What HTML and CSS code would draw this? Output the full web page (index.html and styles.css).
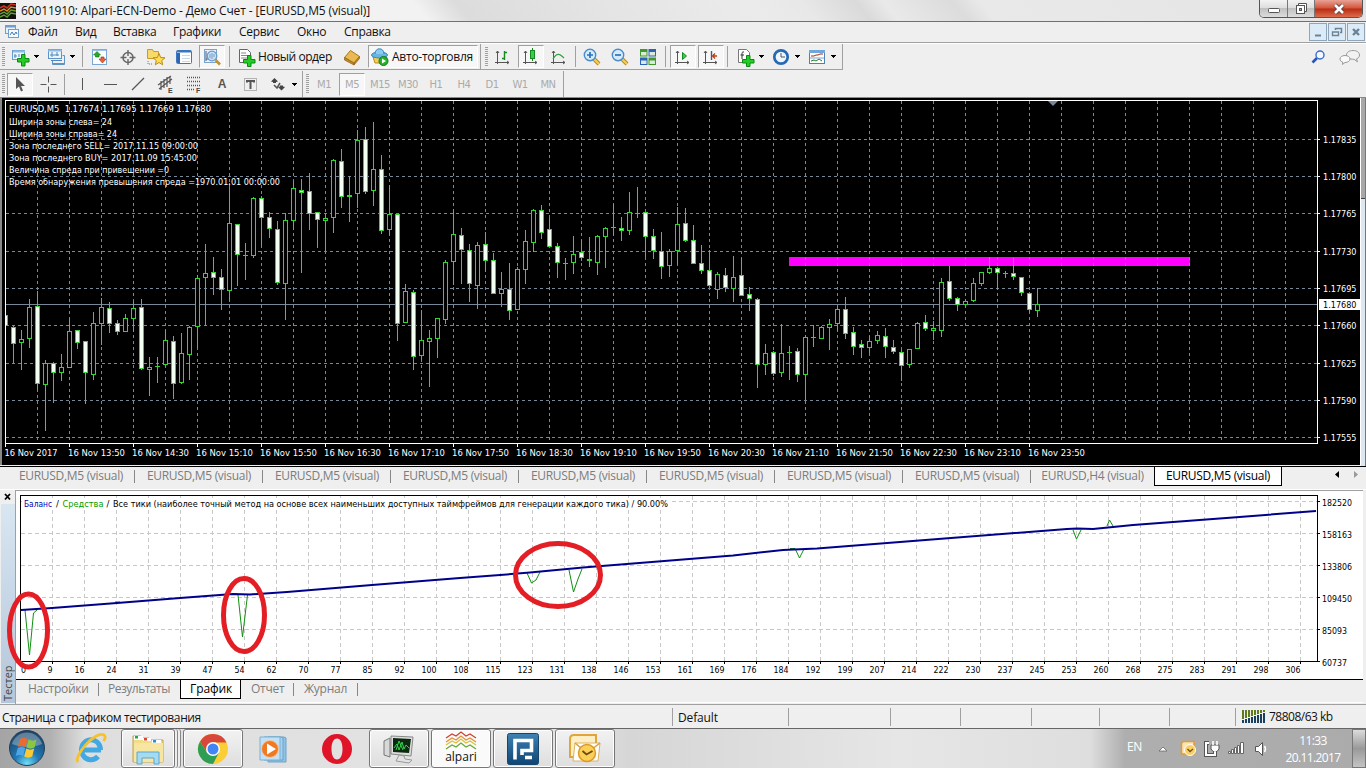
FILE: index.html
```
<!DOCTYPE html>
<html lang="ru">
<head>
  <meta charset="UTF-8" />
  <title>60011910: Alpari-ECN-Demo - Демо Счет</title>
  <link rel="stylesheet" href="styles.css">
</head>
<body>
  <div class="titlebar">
    <svg class="app-logo" width="16" height="16" viewBox="0 0 16 16"><rect width="16" height="16" fill="#111"/><path d="M0 5L4 3 7 5 11 1 16 2" stroke="#d03020" fill="none" stroke-width="1.6"/><path d="M0 8L4 6 7 8 11 4 16 5" stroke="#e08a20" fill="none" stroke-width="1.4"/><path d="M0 11L4 9 7 11 11 7 16 8M0 14L4 12 7 14 11 10 16 11" stroke="#5fa030" fill="none" stroke-width="1.4"/></svg>
    <span class="title">60011910: Alpari-ECN-Demo - Демо Счет - [EURUSD,M5 (visual)]</span>
    <div class="win-buttons">
      <span class="wb min"><svg width="14" height="8"><rect x="1.5" y="2.5" width="11" height="4" rx="1" fill="#fff" stroke="#555"/></svg></span>
      <span class="wb max"><svg width="13" height="13"><path d="M3.500 3V1.500h8v8H10" fill="#fff" stroke="#555"/><rect x="1.500" y="3.500" width="8" height="8" fill="#fff" stroke="#555"/><rect x="4.500" y="6.500" width="2" height="2" fill="#aaa" stroke="#555"/></svg></span>
      <span class="wb close"><svg width="14" height="12"><path d="M3 2l8 8M11 2l-8 8" stroke="#5b4040" stroke-width="4.500"/><path d="M3 2l8 8M11 2l-8 8" stroke="#fff" stroke-width="2.600"/></svg></span>
    </div>
  </div>

  <div class="menubar">
    <svg class="menu-logo" width="16" height="16"><rect x="1.500" y="1.500" width="10" height="8" fill="#e8f2fb" stroke="#6f9fcd"/><path d="M1 2.500h11" stroke="#6f9fcd" stroke-width="2"/><rect x="4.500" y="5.500" width="10" height="8" fill="#f4f9ff" stroke="#6f9fcd"/><path d="M6 11l2-3 2 3 2-3 1 2" stroke="#3f78b8" fill="none"/></svg>
    <span class="m-file">Файл</span><span class="m-view">Вид</span><span class="m-insert">Вставка</span><span class="m-charts">Графики</span><span class="m-service">Сервис</span><span class="m-window">Окно</span><span class="m-help">Справка</span>
    <div class="mdi-buttons">
      <span><svg width="16" height="16"><path d="M5 11.500h6" stroke="#6d8296" stroke-width="2"/></svg></span>
      <span><svg width="16" height="16"><path d="M6.500 6V4.500h6v4H11M6 4.500h7" stroke="#6d8296" fill="none" stroke-width="1.500"/><path d="M3.500 8h6v3.500h-6z" stroke="#6d8296" fill="none" stroke-width="1.400"/></svg></span>
      <span><svg width="16" height="16"><path d="M5 5l6 6M11 5l-6 6" stroke="#6d8296" stroke-width="2.400"/></svg></span>
    </div>
  </div>

  <div class="toolbars">
    <div class="toolrow">
      <div class="toolbar">
        <i class="grip"></i>
        <span class="btn"><svg class="ic"><rect x="2.500" y="3.500" width="12" height="9" fill="#eaf4fc" stroke="#6a9dcc"/><path d="M3 4.500h12" stroke="#8fbce4" stroke-width="2"/><path d="M5 7v4M4 9h3M9 7v3" stroke="#5588b8"/><path d="M11.500 7.500h3.500v4h4v3.500h-4v4h-3.500v-4h-4v-3.500h4z" fill="#25cc25" stroke="#0b8a12"/></svg></span><i class="drop"></i>
        <span class="btn"><svg class="ic"><rect x="2.500" y="2.500" width="13" height="9" fill="#eaf4fc" stroke="#5f93c6"/><path d="M2 3.500h14" stroke="#8fbce4" stroke-width="2"/><path d="M6 5v5M4 8h9M11 5v4" stroke="#5588b8"/><path d="M6.500 13v4.500h12v-9h-2M6 16.500h12" fill="none" stroke="#5f93c6"/><path d="M5 13.500h11" stroke="#4f86bd"/></svg></span><i class="drop"></i>
        <i class="sep"></i>
        <span class="btn"><svg class="ic"><rect x="2.500" y="2.500" width="14" height="15" fill="#fbfdff" stroke="#7aa7d6"/><path d="M2 3h15" stroke="#7db0e2" stroke-width="1.500"/><path d="M7 4.500l3.500 3.500H9v2H5.500V8H3.500z" fill="#28a828" stroke="#126e12" stroke-width=".6"/><path d="M12.500 16l3.500-4h-2v-2h-3v2H9z" fill="#ee6030" stroke="#9c3010" stroke-width=".6"/></svg></span>
        <span class="btn"><svg class="ic"><circle cx="10" cy="10.500" r="5" fill="none" stroke="#666" stroke-width="1.500"/><path d="M10 3v6M10 12v6M2.500 10.500h6M11.500 10.500h6" stroke="#666" stroke-width="1.400"/></svg></span>
        <span class="btn"><svg class="ic"><path d="M1.500 11.500v-9h5l1 2h5v7z" fill="#f8da6a" stroke="#c89a2a"/><path d="M2 14v3h5" stroke="#777" stroke-dasharray="1 1" fill="none"/><path d="M13 6.500l1.700 4 4.300.3-3.300 2.800 1 4.200-3.700-2.300-3.700 2.300 1-4.200L7 10.800l4.300-.3z" fill="#ffdc50" stroke="#bd8a17"/></svg></span>
        <span class="btn"><svg class="ic"><rect x="2.500" y="3.500" width="15" height="13" rx="1" fill="#fff" stroke="#3d76ba"/><path d="M3 4.500h14" stroke="#3875c4" stroke-width="2"/><path d="M4.500 6v10" stroke="#2f66b4" stroke-width="3"/><path d="M8 8.500h8M8 11.500h8M8 14.500h8" stroke="#c7d8f0"/></svg></span>
        <span class="btn on"><svg class="ic"><rect x="2.500" y="2.500" width="12" height="13" fill="#eaf2fa" stroke="#7aa4cc"/><path d="M4 4v10M4 12h9M7 5v6" stroke="#557"/><circle cx="10" cy="9" r="4.800" fill="#c5e1f8" stroke="#6f9ac4" stroke-width="1.300"/><path d="M8 11V7M10 12V6M12 10V7" stroke="#7a9cc0"/><path d="M13.500 13l4.500 4.500" stroke="#c8912c" stroke-width="2.600"/></svg></span>
        <i class="sep order-sep"></i>
        <span class="order"><svg class="ic"><path d="M3.500 2.500h8l3 3v10h-11z" fill="#fff" stroke="#666"/><path d="M5 6h5M5 8.500h8M5 11h6" stroke="#888"/><path d="M11.500 8.500h3.500v4h4v3.500h-4v3.500h-3.500v-3.500h-4v-3.500h4z" fill="#25cc25" stroke="#0b8a12"/></svg><b>Новый ордер</b></span>
        <span class="btn book"><svg class="ic"><path d="M2.500 10.500l6-7 9 6-5.500 6.500z" fill="#eab950" stroke="#a9761c"/><path d="M2.500 10.500l9.500 5.500v2l-9.500-5zM12 16l5.500-6.500v2L12 18z" fill="#c08a2c" stroke="#98681a" stroke-width=".8"/></svg></span>
        <span class="auto"><svg class="ic"><path d="M3 10l2 6h10l2-6z" fill="#f6cf4c" stroke="#b88c24"/><ellipse cx="9.500" cy="8" rx="8" ry="3" fill="#68b6e6" stroke="#3c86b8"/><path d="M5 7c0-7 9-7 9 0" fill="#8ccbee" stroke="#3c86b8"/><circle cx="13.500" cy="14" r="4.500" fill="#27b327" stroke="#117a1a"/><path d="M12 11.500v5l4-2.500z" fill="#fff"/></svg><b>Авто-торговля</b></span>
      </div>
      <div class="toolbar charts-bar">
        <i class="grip"></i>
        <span class="btn"><svg class="ic"><path d="M4.500 4v13M2 15.500h14M3 6l1.500-2L6 6M14 14l2 1.500-2 1.500" stroke="#555" fill="none"/><path d="M11.500 4v9M9 11.500h2.500M11.500 5.500H14" stroke="#168a20" stroke-width="1.400"/></svg></span>
        <span class="btn on"><svg class="ic"><path d="M4.500 4v13M2 15.500h14M3 6l1.500-2L6 6M14 14l2 1.500-2 1.500" stroke="#555" fill="none"/><path d="M11.500 1v13" stroke="#168a20"/><rect x="9.500" y="3.500" width="4" height="8" fill="#35d045" stroke="#168a20"/></svg></span>
        <span class="btn"><svg class="ic"><path d="M4.500 4v13M2 15.500h14M3 6l1.500-2L6 6M14 14l2 1.500-2 1.500" stroke="#555" fill="none"/><path d="M4 12c4-7 7-5 11-1" stroke="#35a040" fill="none" stroke-width="1.300"/></svg></span>
        <i class="sep narrow"></i>
        <span class="btn"><svg class="ic"><path d="M12 12l5 5" stroke="#b98520" stroke-width="4"/><path d="M12 12l5 5" stroke="#f4cd54" stroke-width="2.200"/><circle cx="8" cy="8" r="5.700" fill="#d4ebfb" stroke="#4b8bc8" stroke-width="1.400"/><path d="M5 8h6M8 5v6" stroke="#2c73b8" stroke-width="1.700"/></svg></span>
        <span class="btn"><svg class="ic"><path d="M12 12l5 5" stroke="#b98520" stroke-width="4"/><path d="M12 12l5 5" stroke="#f4cd54" stroke-width="2.200"/><circle cx="8" cy="8" r="5.700" fill="#d4ebfb" stroke="#4b8bc8" stroke-width="1.400"/><path d="M5 8h6" stroke="#2c73b8" stroke-width="1.700"/></svg></span>
        <span class="btn"><svg class="ic"><path d="M2 2h7.500v7.500H2zM10.500 10.500H18V18h-7.500z" fill="#3f9a2c"/><path d="M10.500 2H18v7.500h-7.500zM2 10.500h7.500V18H2z" fill="#2d62b8"/><path d="M3 5h5.500v3.500H3zM11.500 5H17v3.500h-5.500zM3 13.500h5.500V17H3zM11.500 13.500H17V17h-5.500z" fill="#dcebd8"/></svg></span>
        <i class="sep wide"></i>
        <span class="btn on"><svg class="ic"><path d="M4.500 4v13M2 15.500h14M3 6l1.500-2L6 6M14 14l2 1.500-2 1.500" stroke="#555" fill="none"/><path d="M9.500 5.500v7l4-3.500z" fill="#40c850" stroke="#168a20"/></svg></span>
        <span class="btn on"><svg class="ic"><path d="M4.500 4v13M2 15.500h14M3 6l1.500-2L6 6M14 14l2 1.500-2 1.500" stroke="#555" fill="none"/><path d="M10.500 4v9" stroke="#3a5f8a" stroke-width="1.400"/><path d="M16 9h-4M14 6.500L11.500 9l2.500 2.500" stroke="#c43a14" fill="none" stroke-width="1.300"/></svg></span>
        <i class="sep small"></i>
        <span class="btn"><svg class="ic"><path d="M3.500 2.500h8l3 3v10h-11z" fill="#fff" stroke="#777"/><path d="M9 5c-2-.5-2 1-2 2v5M5.500 8h3.500" stroke="#333" fill="none"/><path d="M11.500 8.500h3.500v4h4v3.500h-4v3.500h-3.500v-3.500h-4v-3.500h4z" fill="#25cc25" stroke="#0b8a12"/></svg></span><i class="drop"></i>
        <span class="btn"><svg class="ic"><circle cx="10" cy="10" r="6.700" fill="#eef6fd" stroke="#2568b4" stroke-width="2.700"/><path d="M10 6v4h4" stroke="#555" fill="none"/></svg></span><i class="drop"></i>
        <span class="btn"><svg class="ic"><rect x="2.500" y="3.500" width="15" height="13" fill="#fff" stroke="#4d80b4"/><path d="M2 4.500h16" stroke="#6fa6dc" stroke-width="3"/><path d="M4 9h3l2-1h2l2-1h3" stroke="#a02818" fill="none"/><path d="M3 11h14" stroke="#7aa6d0"/><path d="M4 14l3-1 2 1 3-2 3 2" stroke="#208030" fill="none"/></svg></span><i class="drop"></i>
      </div>
      <div class="tool-right">
        <svg width="16" height="16"><path d="M1.500 13.500L6 9" stroke="#2454c0" stroke-width="2.600"/><circle cx="9" cy="6" r="4" fill="#f4f8ff" stroke="#3b6ad0" stroke-width="1.400"/></svg>
        <svg width="22" height="17"><path d="M14 1.500c4 0 6.500 2 6.500 4.500 0 2-1 3-3 3.800l1 3-3.500-2.500c-5 0-7.500-1.800-7.500-4.300s2.500-4.500 6.500-4.500z" fill="#f2f2f2" stroke="#999"/><path d="M6 6.500c3 0 5 1.500 5 3.500s-2 3.500-5 3.500l-2.500 2 .3-2.500C2 12.500 1 11.500 1 10c0-2 2-3.500 5-3.500z" fill="#fafafa" stroke="#999"/></svg>
      </div>
    </div>

    <div class="toolrow second">
      <div class="toolbar lines-bar">
        <i class="grip"></i>
        <span class="btn on"><svg class="ic"><path d="M6 3v12l3-2.500 2 5 2-1-2-4.500h4z" fill="#555"/></svg></span>
        <span class="btn"><svg class="ic"><path d="M10.500 2.500v6M10.500 12.500v6M2.500 10.500h6M12.500 10.500h6" stroke="#555"/></svg></span>
        <i class="sep small"></i>
        <span class="btn"><svg class="ic"><path d="M10.500 4v12" stroke="#555"/></svg></span>
        <span class="btn"><svg class="ic"><path d="M4 10.500h13" stroke="#555"/></svg></span>
        <span class="btn"><svg class="ic"><path d="M4 16L16 4" stroke="#555" stroke-width="1.200"/></svg></span>
        <span class="btn"><svg class="ic"><path d="M2 11L15 2M3 15L16 5M5 7v9M8 5v9M11 3v10M14 2v8" stroke="#555" stroke-width="1.200"/><text x="12" y="19" class="ic-sub">E</text></svg></span>
        <span class="btn"><svg class="ic"><path d="M3 3.500h14M3 7.500h14M3 11.500h14M3 15.500h7" stroke="#555" stroke-width="1.300" stroke-dasharray="1 1"/><text x="12" y="19" class="ic-sub">F</text></svg></span>
        <span class="btn letter">A</span>
        <span class="btn"><svg class="ic"><rect x="4.500" y="4.500" width="12" height="12" fill="none" stroke="#777" stroke-dasharray="1 1"/><path d="M7 8.500V7h7v1.500M10.500 7v8" stroke="#555" stroke-width="2" fill="none"/></svg></span>
        <span class="btn"><svg class="ic"><path d="M6.500 4l3.500 3.500-2 .5v1H5V8L3 7.500zM13.500 16.500L10 13l2-.5v-1h3v1l2 .5z" fill="#444"/><path d="M6 11l3 3 3-5" stroke="#555" fill="none" stroke-width="1.500"/></svg></span><i class="drop"></i>
      </div>
      <div class="toolbar periods">
        <i class="grip"></i>
        <span class="btn">M1</span><span class="btn on">M5</span><span class="btn">M15</span><span class="btn">M30</span><span class="btn">H1</span><span class="btn">H4</span><span class="btn">D1</span><span class="btn">W1</span><span class="btn">MN</span>
      </div>
    </div>
  </div>

  <div class="workspace">
    <svg id="priceChart" width="1360" height="367"></svg>
    <div class="edge"></div>
  </div>

  <div class="chart-tabs">
    <span>EURUSD,M5 (visual)</span><span>EURUSD,M5 (visual)</span><span>EURUSD,M5 (visual)</span><span>EURUSD,M5 (visual)</span><span>EURUSD,M5 (visual)</span><span>EURUSD,M5 (visual)</span><span>EURUSD,M5 (visual)</span><span>EURUSD,M5 (visual)</span><span class="h4">EURUSD,H4 (visual)</span><span class="active">EURUSD,M5 (visual)</span>
    <svg class="tab-arrows" width="30" height="12"><path d="M7 2v7L3 5.500z" fill="#000"/><path d="M22 2v7l4-3.500z" fill="#999"/></svg>
  </div>

  <div class="tester">
    <div class="tester-side">
      <svg width="14" height="14"><path d="M4 4l5 5.500M9 4L4 9.500" stroke="#000" stroke-width="1.800"/></svg>
      <div class="side-title"><span>Тестер</span></div>
    </div>
    <div class="tester-main">
      <svg id="balanceChart" width="1347" height="188" viewBox="16 491 1347 188"></svg>
      <div class="tester-tabs">
        <span class="t-settings">Настройки</span><span class="t-results">Результаты</span><span class="t-graph active">График</span><span class="t-report">Отчет</span><span class="t-journal">Журнал</span>
      </div>
    </div>
  </div>

  <div class="statusbar">
    <span class="s-text">Страница с графиком тестирования</span>
    <span class="s-default">Default</span><span class="c103"></span><span class="c70"></span><span class="c71"></span><span class="c68"></span><span class="c70"></span><span class="c66"></span>
    <span class="s-net">
      <svg id="netBars" width="24" height="14"></svg>
      <b>78808/63 kb</b>
    </span>
  </div>

  <div class="taskbar">
    <div class="start"><svg width="38" height="38" viewBox="0 0 38 38">
      <defs><radialGradient id="orb" cx=".5" cy=".95" r=".9"><stop offset="0" stop-color="#6fe0f8"/><stop offset=".4" stop-color="#2277b4"/><stop offset="1" stop-color="#1c4468"/></radialGradient></defs>
      <circle cx="19" cy="19" r="17.500" fill="url(#orb)" stroke="#243f58"/><path d="M4 15a15.500 15.500 0 0 1 30 0c-9 4-20 4-30 0z" fill="#fff" opacity=".3"/>
      <path d="M12 10c3-1.500 5-1.500 7.500 0l-2 8c-2.500-1.500-5-1.500-7.500 0z" fill="#ee6a2c"/><path d="M20.500 10.500c3 1.500 5.500 1.500 8 0l-2 8c-2.500 1.500-5 1.500-8 0z" fill="#8cc63c"/><path d="M9.700 19c3-1.500 5-1.500 7.500 0l-2 8c-2.500-1.500-5-1.500-7.500 0z" fill="#4aa6e8"/><path d="M18.200 19.500c3 1.500 5.500 1.500 8 0l-2 8c-2.500 1.500-5 1.500-8 0z" fill="#fbc934"/></svg></div>
    <div class="task ie"><svg width="34" height="34" viewBox="0 0 34 34"><path d="M8 18h19M26.500 18a9.500 10 0 1 0-2.500 6.500" fill="none" stroke="#43a9e2" stroke-width="5"/><path d="M4 30C-1 24 22-2 30 3c2 1.500 1 4-.5 6" fill="none" stroke="#f5c22e" stroke-width="2.800"/></svg></div>
    <div class="task boxed explorer"><svg width="36" height="34" viewBox="0 0 36 34"><path d="M3 4h8l2 2h6l2 2h12v22H3z" fill="#f3dc88" stroke="#c3a148"/><path d="M4 4h9v4H4zM13 6h8v3h-8zM22 8h9v3h-9z" fill="#fff"/><path d="M5 4h3v2.500H5z" fill="#2da44a"/><path d="M14 6h3v2.500h-3z" fill="#d9482a"/><path d="M23 8h3v2.500h-3z" fill="#2b8ed0"/><path d="M4 11h29v19H4z" fill="#f7e6a2"/><path d="M7 32V20h22v12h-5v-6H12v6z" fill="#a5daf3" stroke="#5ba6cc"/></svg></div>
    <div class="task boxed chrome"><svg width="32" height="32" viewBox="0 0 32 32"><circle cx="16" cy="16" r="15" fill="#fcce35"/><path d="M16 9.500h13.500A15 15 0 0 0 3 8.500l7 11z" fill="#d8473a"/><path d="M10 19.500L3 8.500A15 15 0 0 0 16 31l6-11.500z" fill="#2f9e55"/><circle cx="16" cy="16" r="7" fill="#fff"/><circle cx="16" cy="16" r="5.500" fill="#4285f4"/></svg></div>
    <div class="task wmp"><svg width="32" height="30" viewBox="0 0 32 30"><path d="M10 3h16l2 1v24H10z" fill="#8fc3e6" stroke="#6da3c8"/><path d="M6 3h17l2 1v22H6z" fill="#a7d3ef" stroke="#6da3c8"/><path d="M2 3h20v23H2z" fill="#c0e1f6" stroke="#7db0d2"/><circle cx="12" cy="15" r="8.500" fill="#ef7a24" stroke="#f8c79c"/><path d="M9 9.500v11l9-5.500z" fill="#fff"/></svg></div>
    <div class="task opera"><svg width="32" height="32" viewBox="0 0 32 32"><path fill-rule="evenodd" d="M16 1a15 15 0 1 0 0 30 15 15 0 1 0 0-30zm0 4.500c3.600 0 5.500 4.500 5.500 10.500s-1.900 10.500-5.500 10.500-5.500-4.500-5.500-10.500 1.900-10.500 5.500-10.500z" fill="#df1428"/></svg></div>
    <div class="task boxed terminal"><svg width="34" height="32" viewBox="0 0 34 32"><path d="M2 8l6-3v19l-6-2z" fill="#d8d8d8" stroke="#777"/><path d="M9 3l22 1-2 19-20-2z" fill="#ddd" stroke="#888"/><path d="M11 5l18 1-2 14-16-1z" fill="#0c2a10"/><path d="M12 15l3-4 2 6 3-8 2 7 2-4 3 3M14 17l3-9 4 9" stroke="#35d04a" fill="none"/><path d="M17 22l5 1 1 3 7 1-3 3-13-2z" fill="#e2e2e2" stroke="#999"/></svg></div>
    <div class="task boxed alpari"><svg width="34" height="19" viewBox="0 0 34 19"><g fill="none" stroke-width="1.200"><path d="M2 7l6-4 4 2 5-4 5 4 4-2 6 4" stroke="#d04030"/><path d="M2 11l6-4 4 2 5-4 5 4 4-2 6 4" stroke="#e29030"/><path d="M2 14l6-4 4 2 5-4 5 4 4-2 6 4" stroke="#d8c040"/><path d="M2 18l6-4 4 2 5-4 5 4 4-2 6 4" stroke="#68a838"/></g></svg><b>alpari</b></div>
    <div class="task boxed rbox"><svg width="32" height="32" viewBox="0 0 32 32"><defs><linearGradient id="bl" x2="0" y2="1"><stop offset="0" stop-color="#3e82b4"/><stop offset="1" stop-color="#0e4674"/></linearGradient></defs><rect x=".5" y=".5" width="31" height="31" rx="2" fill="url(#bl)" stroke="#17456c"/><path d="M8 26.500V7.500h16.500v10H15V22M18 24.500h7" fill="none" stroke="#fff" stroke-width="3.600"/></svg></div>
    <div class="task boxed outlook"><svg width="34" height="32" viewBox="0 0 34 32"><path d="M2 24V6q0-4 4-4h22v22z" fill="#fdeec4" stroke="#e2a53a" stroke-width="2"/><path d="M7 10h25l-2 18H5z" fill="#fff" stroke="#d9b26a"/><path d="M7 10l12 10 13-10" fill="none" stroke="#dba23a" stroke-width="1.500"/><circle cx="19" cy="20" r="8.500" fill="#fbcf58" stroke="#d99a26" stroke-width="1.500"/><path d="M14.500 18l4 3.500 6-3.500" fill="none" stroke="#6b4a10" stroke-width="1.800"/></svg></div>
    <div class="tray">
      <span class="lang">EN</span>
      <svg class="tr-up" width="10" height="8"><path d="M1 6L5 2l4 4z" fill="#fff" stroke="#666" stroke-width=".8"/></svg>
      <svg class="tr-mail" width="17" height="17"><path d="M1.500 14V4q0-2.500 2.500-2.500h10V14z" fill="#fbe4b4" stroke="#e39a34" stroke-width="1.500"/><circle cx="10" cy="10" r="5.500" fill="#f9cf66" stroke="#fff"/><path d="M7.500 9l2.500 2.500L13 9" fill="none" stroke="#7a5210" stroke-width="1.400"/></svg>
      <svg class="tr-plug" width="17" height="17"><path d="M5 3H2v12h9v-3" fill="none" stroke="#555" stroke-width="4"/><path d="M5 3H2v12h9v-3" fill="none" stroke="#fff" stroke-width="2"/><path d="M7 5h8v4l-2 2.500h-4L7 9z" fill="#fff" stroke="#555"/><path d="M9 1v4M13 1v4M11 11v3" stroke="#fff" stroke-width="1.600"/></svg>
      <svg class="tr-net" width="17" height="15"><g fill="#fff" stroke="#666"><path d="M.5 10.500h2v2h-2zM3.500 8.500h2v4h-2zM6.500 6.500h2v6h-2zM9.500 4.500h2v8h-2zM12.500 1.500h3v11h-3z"/></g></svg>
      <svg class="tr-sound" width="15" height="16"><path d="M1.500 5.500h3l4-4v13l-4-4h-3z" fill="#fff" stroke="#555"/><path d="M10.500 5q2 3 0 6" stroke="#fff" fill="none" stroke-width="1.500"/></svg>
      <div class="clock"><div>11:33</div><div>20.11.2017</div></div>
      <div class="peek"></div>
    </div>
  </div>

  <script src="charts.js"></script>
</body>
</html>
```
FILE: styles.css
```
* {
  box-sizing: border-box;
}

body {
  margin: 0;
  width: 1366px;
  height: 768px;
  overflow: hidden;
  display: flex;
  flex-direction: column;
  background: #efefef;
  font-family: 'Open Sans', 'Noto Sans', sans-serif;
  font-size: 12px;
  color: #111;
  white-space: nowrap;
}

svg {
  display: block;
  flex: none;
}

b {
  font-weight: normal;
}

/* Title bar */
.titlebar {
  height: 22px;
  flex: none;
  display: flex;
  align-items: flex-start;
  border-bottom: 1px solid #707070;
  background: linear-gradient(50deg, #f0f0f0 0, #f2f2f2 31%, #dcdcdc 34%, #e4e4e4 44%, #ebebeb 55%, #e8e8e8 59%, #dadada 63%, #e9e9e9 65%, #dcdcdc 70%, #e9e9e9 72%, #e4e4e4 100%);
}

.app-logo {
  margin-top: 3px;
}

.title {
  margin-left: 5px;
  line-height: 22px;
  letter-spacing: -0.14px;
}

.win-buttons {
  display: flex;
  margin-left: auto;
  margin-right: 3px;
  height: 18px;
  border: 1px solid #555;
  border-top: none;
  border-radius: 0 0 5px 5px;
  overflow: hidden;
}

.wb {
  width: 28px;
  display: flex;
  align-items: center;
  justify-content: center;
  border-right: 1px solid #777;
  background: linear-gradient(#f3f3f3, #dedede 45%, #c0c0c0 50%, #dcdcdc);
}

.wb.min {
  padding-top: 3px;
}

.wb.max {
  width: 27px;
}

.wb.close {
  width: 47px;
  border: none;
  background: linear-gradient(#e8a296, #d4543a 48%, #b92c13 52%, #dc6c4c);
}

/* Menu */
.menubar {
  height: 21px;
  flex: none;
  display: flex;
  align-items: center;
  border-bottom: 1px solid #a0a0a0;
  letter-spacing: -0.3px;
}

.menu-logo {
  margin-left: 4px;
}

.menubar > span {
  line-height: 20px;
}

.m-file { margin-left: 8px; width: 47px; }
.m-view { width: 38px; }
.m-insert { width: 60px; }
.m-charts { width: 66px; }
.m-service { width: 58px; }
.m-window { width: 47px; }

.mdi-buttons {
  display: flex;
  gap: 1px;
  margin-left: auto;
  margin-right: 1px;
}

.mdi-buttons span {
  width: 18px;
  height: 18px;
  border: 1px solid #8fa5ba;
  background: #dcebf8;
}

/* Toolbars */
.toolbars {
  height: 55px;
  flex: none;
  border-top: 1px solid #fff;
  border-bottom: 1px solid #8a8a8a;
}

.toolrow {
  height: 27px;
  display: flex;
}

.toolbar {
  height: 26px;
  display: flex;
  align-items: center;
  width: 481px;
  border-right: 1px solid #a0a0a0;
  border-bottom: 1px solid #a0a0a0;
}

.charts-bar {
  width: 362px;
  padding-left: 2px;
}

.second .toolbar {
  border-bottom: none;
}

.lines-bar {
  width: 303px;
}

.periods {
  width: 261px;
  padding-left: 1px;
}

.grip {
  flex: none;
  width: 3px;
  height: 20px;
  margin: 0 1px 0 2px;
  background: repeating-linear-gradient(#a0a0a0 0 1px, #efefef 1px 2px);
}

.btn {
  flex: none;
  width: 26px;
  height: 23px;
  margin: 0 1px;
  display: flex;
  align-items: center;
  justify-content: center;
}

.ic {
  width: 20px;
  height: 20px;
}

.ic-sub {
  font: bold 7px 'Liberation Sans', sans-serif;
  fill: #444;
}

.on, .auto {
  background: #f7f7f7;
  border: 1px solid #a0a0a0;
  border-right-color: #fff;
  border-bottom-color: #fff;
}

.drop {
  flex: none;
  width: 8px;
  height: 3px;
  background: linear-gradient(#000, #000) 0 0 / 5px 1px no-repeat, linear-gradient(#000, #000) 1px 1px / 3px 1px no-repeat, linear-gradient(#000, #000) 2px 2px / 1px 1px no-repeat;
}

.sep {
  flex: none;
  width: 1px;
  height: 21px;
  margin: 0 3px 0 4px;
  background: #a0a0a0;
}

.sep.narrow { margin: 0 2px; }
.sep.small { margin: 0 3px 0 2px; }
.sep.wide { margin: 0 3px; }
.sep.order-sep { margin: 0 3px; }

.order, .auto {
  flex: none;
  display: flex;
  align-items: center;
}

.order {
  width: 101px;
  padding-left: 3px;
}

.order b {
  margin-left: 2px;
  letter-spacing: -0.42px;
}

.book {
  margin-left: 5px;
}

.auto {
  width: 110px;
  height: 23px;
  margin-left: 2px;
  padding-left: 1px;
}

.auto b {
  margin-left: 2px;
  letter-spacing: -0.25px;
}

.letter {
  font: bold 12px 'Liberation Sans', sans-serif;
  color: #555;
}

.periods .btn {
  font: 10px 'DejaVu Sans', sans-serif;
  letter-spacing: -0.5px;
  color: #aaa;
}

.tool-right {
  margin-left: auto;
  margin-right: 5px;
  display: flex;
  gap: 12px;
  padding-top: 5px;
}

/* Price chart */
.workspace {
  height: 368px;
  flex: none;
  display: flex;
}

#priceChart {
  background: #000;
  box-shadow: inset 2px 0 #888;
}

.edge {
  width: 6px;
  border-left: 1px solid #fff;
  background: linear-gradient(#a8a8a8 0 100px, #444 100px 101px, #dbe8f2 101px);
  border-right: 1px solid #777;
}

/* Chart tabs */
.chart-tabs {
  height: 24px;
  flex: none;
  display: flex;
  align-items: flex-start;
  border-top: 1px solid #000;
  padding-left: 7px;
  border-bottom: 1px solid #fff;
}

.chart-tabs span, .tester-tabs span {
  color: #7c7c7c;
}

.chart-tabs span {
  width: 128px;
  height: 19px;
  line-height: 17px;
  text-align: center;
  letter-spacing: -0.3px;
  background: linear-gradient(#888, #888) 100% 3px / 1px 13px no-repeat;
}

.chart-tabs .h4 {
  width: 123px;
  background: none;
}

.chart-tabs .active {
  color: #000;
  background: #fff;
  border: 1px solid #000;
  border-top: none;
}

.tab-arrows {
  margin: 2px 0 0 50px;
}

/* Tester */
.tester {
  height: 214px;
  flex: none;
  display: flex;
}

.tester-side {
  width: 16px;
  padding-left: 1px;
  border-right: 1px solid #a0a0a0;
}

.side-title {
  width: 14px;
  height: 199px;
  background: linear-gradient(#d9e6f2, #b4c6da);
  display: flex;
  align-items: flex-start;
}

.side-title span {
  writing-mode: vertical-rl;
  transform: rotate(180deg);
  height: 197px;
  line-height: 14px;
  font-size: 11px;
  color: #444;
}

.tester-main {
  width: 1347px;
  border-top: 1px solid #a0a0a0;
}

#balanceChart {
  background: #fff;
  overflow: visible;
}

.tester-tabs {
  display: flex;
  border-top: 1px solid #000;
  height: 24px;
  border-bottom: 1px solid #fff;
  letter-spacing: -0.25px;
}

.tester-tabs span {
  height: 19px;
  line-height: 18px;
  padding-left: 10px;
}

.tester-tabs .t-settings, .tester-tabs .t-report, .tester-tabs .t-journal {
  background: linear-gradient(#888, #888) 100% 3px / 1px 13px no-repeat;
}

.t-settings { width: 81px; margin-left: 2px; }
.tester-tabs .t-results { width: 81px; padding-left: 9px; letter-spacing: -0.5px; }
.t-graph { width: 61px; letter-spacing: -0.1px; }
.t-report { width: 53px; }
.t-journal { width: 64px; }

.tester-tabs .t-graph {
  color: #000;
  background: #fff;
  border: 1px solid #000;
  border-top: none;
  padding-left: 9px;
}

/* Status bar */
.statusbar {
  height: 24px;
  flex: none;
  display: flex;
  align-items: center;
  border-top: 1px solid #a0a0a0;
  letter-spacing: -0.15px;
}

.statusbar > span {
  height: 18px;
  line-height: 19px;
  border-right: 1px solid #a0a0a0;
}

.s-text { width: 673px; padding-left: 2px; letter-spacing: -0.37px; }
.s-default { width: 116px; padding-left: 5px; }
.c103 { width: 102px; }
.c70 { width: 70px; }
.c71 { width: 71px; }
.c68 { width: 68px; }
.c66 { width: 66px; }

.statusbar .s-net {
  display: flex;
  align-items: center;
  padding-left: 6px;
  border: none;
  letter-spacing: -0.5px;
}

.s-net b {
  margin-left: 3px;
}

/* Taskbar */
.taskbar {
  height: 40px;
  flex: none;
  display: flex;
  align-items: stretch;
  border-top: 1px solid #666;
  background: linear-gradient(90deg, #a4a4a4 0, #b0b0b0 50px, #dedede 85px, #e4e4e4 560px, #d6d6d6 630px, #e6e6e6 900px, #dedede 1090px, #aeaeae 1125px, #ababab 1366px);
}

.start {
  width: 60px;
  padding-left: 8px;
}

.task {
  display: flex;
  align-items: center;
  justify-content: center;
}

.boxed {
  border: 1px solid #777;
  border-radius: 3px;
  box-shadow: inset 0 0 0 1px #fff;
  background: linear-gradient(#f2f2f2, #dedede);
}

.ie { width: 61px; }
.explorer { width: 54px; margin-right: 8px; box-shadow: inset 0 0 0 1px #fff, 2px 0 #eee, 3px 0 #888, 5px 0 #eee, 6px 0 #888; }
.chrome { width: 60px; }
.wmp { width: 62px; }
.opera { width: 64px; }
.terminal { width: 60px; margin-right: 2px; }
.alpari { width: 60px; margin-right: 2px; flex-direction: column; background: #fafafa; }
.rbox { width: 60px; margin-right: 2px; }
.outlook { width: 60px; }

.alpari b {
  font-size: 12px;
  line-height: 14px;
  margin-bottom: 2px;
}

.tray {
  margin-left: auto;
  display: flex;
  align-items: center;
  color: #fff;
}

.lang {
  margin: 0 16px 5px 0;
  letter-spacing: -0.3px;
}

.tr-up { margin-right: 12px; }
.tr-mail { margin-right: 7px; }
.tr-plug { margin-right: 7px; }
.tr-net { margin-right: 9px; }
.tr-sound { margin-right: 17px; }

.clock {
  width: 54px;
  line-height: 17px;
  letter-spacing: -0.6px;
  display: flex;
  flex-direction: column;
  align-items: center;
  margin-right: 12px;
}

.peek {
  width: 14px;
  align-self: stretch;
  border: 1px solid #777;
  background: linear-gradient(#dcdcdc, #999 50%, #c4c4c4);
}

.plot-text {
  font-family: 'DejaVu Sans Condensed', 'DejaVu Sans', sans-serif;
  font-stretch: condensed;
  font-size: 9.500px;
  white-space: pre;
}
```
FILE: charts.js
```
const NS = "http://www.w3.org/2000/svg";

function add(svg, tag, attrs, text) {
  const el = document.createElementNS(NS, tag);
  for (const key in attrs) el.setAttribute(key, attrs[key]);
  if (text !== undefined) el.textContent = text;
  svg.appendChild(el);
  return el;
}

function label(svg, x, y, text, fill, width, anchor) {
  const attrs = { x, y, fill, class: "plot-text" };
  if (width) {
    attrs.textLength = width;
    attrs.lengthAdjust = "spacingAndGlyphs";
  }
  if (anchor) attrs["text-anchor"] = anchor;
  add(svg, "text", attrs, text);
}

// high, body top, body bottom, low, direction (1 - up)
const candles = [
  [210,217,228,255,0],[228,229,246,265,0],[232,241,245,272,1],[201,209,241,250,1],[193,208,286,292,0],
  [262,265,287,333,1],[264,265,275,305,0],[256,269,275,283,1],[220,233,270,270,1],[232,232,245,251,0],
  [243,243,275,306,0],[214,225,277,282,1],[200,209,226,247,1],[204,210,226,235,0],[222,225,234,237,0],
  [216,220,234,234,1],[204,210,221,234,1],[201,209,271,272,0],[259,269,272,298,1],[259,268,268,285,1],
  [232,242,267,268,1],[238,243,286,301,0],[235,255,285,286,1],[228,229,257,282,1],[177,180,229,250,1],
  [146,175,180,228,1],[159,174,180,197,0],[171,179,192,212,0],[85,125,193,203,1],[126,126,157,188,0],
  [145,157,157,182,1],[99,100,158,160,1],[98,100,120,148,0],[114,119,131,140,0],[123,131,185,187,0],
  [115,122,186,222,1],[83,90,123,132,1],[81,92,95,175,0],[75,93,116,132,0],[114,114,122,150,0],
  [115,120,123,153,1],[61,62,120,135,1],[51,63,99,110,0],[78,97,99,124,1],[32,42,96,110,1],
  [29,41,94,96,0],[24,71,93,108,1],[57,71,133,136,0],[87,116,132,138,1],[116,116,226,243,0],
  [186,193,225,225,1],[192,194,259,272,0],[212,242,258,262,1],[232,240,244,289,1],[220,220,241,260,1],
  [162,164,222,226,1],[111,136,164,187,1],[130,137,152,186,0],[146,152,186,204,0],[144,147,188,211,1],
  [134,146,163,174,0],[155,162,196,196,0],[174,191,196,209,1],[165,191,213,222,0],[169,171,212,212,1],
  [132,143,172,186,1],[111,112,145,154,1],[107,112,135,141,0],[120,131,149,149,0],[145,148,165,180,0],
  [160,165,165,182,1],[138,156,165,176,1],[142,154,160,163,0],[139,161,163,169,0],[137,138,165,177,1],
  [129,130,139,170,1],[106,129,129,138,1],[119,130,133,143,0],[94,114,133,137,1],[89,115,115,120,1],
  [114,114,139,159,0],[131,138,153,161,0],[134,153,169,181,0],[151,153,168,179,1],[109,126,153,166,1],
  [110,125,143,144,0],[127,142,166,166,0],[147,165,173,176,0],[152,172,188,189,0],[174,176,192,201,1],
  [170,177,190,194,0],[158,179,191,204,1],[160,177,198,198,0],[189,196,201,213,0],[200,201,267,290,0],
  [246,255,267,277,1],[253,254,276,278,0],[226,255,275,279,1],[248,254,254,282,1],[250,253,277,284,0],
  [237,239,277,302,1],[227,239,239,249,1],[228,229,241,241,1],[221,226,230,252,1],[208,211,226,233,1],
  [199,211,236,241,0],[229,234,249,257,0],[242,246,250,260,0],[238,243,250,255,1],[233,237,243,246,1],
  [230,238,249,260,0],[242,249,254,256,0],[252,254,268,283,0],[251,251,267,270,1],[224,225,251,251,1],
  [217,224,231,233,0],[223,230,233,242,1],[180,184,233,239,1],[168,183,201,203,0],[199,200,207,213,0],
  [201,203,207,210,1],[180,185,203,204,1],[174,174,186,188,1],[159,170,175,176,1],[169,170,175,191,0],
  [173,175,175,180,1],[160,175,179,182,0],[179,179,195,198,0],[194,195,212,214,0],[190,206,213,219,1]
];

function drawPriceChart() {
  const svg = document.getElementById("priceChart");
  const grid = "#778899";
  const green = "#32d832";
  const root = add(svg, "g", {});
  const rows = [41.5, 78.5, 115.5, 153.5, 190.5, 227.5, 265.5, 302.5, 339.5];
  const prices = ["1.17835", "1.17800", "1.17765", "1.17730", "1.17695", "1.17660", "1.17625", "1.17590", "1.17555"];

  add(root, "rect", { x: 789, y: 159, width: 401, height: 9, fill: "#ff00ff" });
  for (let x = 37.5; x < 1317; x += 32) {
    add(root, "path", { d: `M${x} 3V345`, stroke: grid, "stroke-dasharray": "3 3" });
  }
  rows.forEach((y, i) => {
    add(root, "path", { d: `M6 ${y}H1317`, stroke: grid, "stroke-dasharray": "3 3" });
    add(root, "path", { d: `M1318 ${y}h2`, stroke: "#fff" });
    label(root, 1323, y + 3.5, prices[i], "#fff", 33.5);
  });
  add(root, "path", { d: "M5 206.500H1317", stroke: grid });

  candles.forEach(([high, top, bottom, low, up], i) => {
    const x = 5.5 + i * 8;
    const wick = up && top !== bottom ? `M${x} ${high}V${top}M${x} ${bottom}V${low}` : `M${x} ${high}V${low}`;
    add(root, "path", { d: wick, stroke: green });
    if (top === bottom) {
      add(root, "path", { d: `M${x - 2.5} ${top + 0.5}h5`, stroke: green });
    } else {
      add(root, "rect", { x: x - 2, y: top + 0.5, width: 4, height: Math.max(bottom - top - 1, 1), fill: up ? "#000" : "#f4fff4", stroke: green });
    }
  });

  // left part of the first candle is outside of the plot
  add(root, "rect", { x: 2, y: 3, width: 3, height: 342, fill: "#000" });
  add(root, "rect", { x: 5.5, y: 2.5, width: 1312, height: 343, fill: "none", stroke: "#fff" });
  add(root, "path", { d: "M1048 3h10l-5 5z", fill: grid });
  add(root, "rect", { x: 1319, y: 201, width: 41, height: 11, fill: "#fff" });
  label(root, 1323, 210, "1.17680", "#000", 33.5);

  const times = ["2017", "13:50", "14:30", "15:10", "15:50", "16:30", "17:10", "17:50", "18:30", "19:10", "19:50", "20:30", "21:10", "21:50", "22:30", "23:10", "23:50"];
  times.forEach((t, i) => {
    const x = 5 + i * 64;
    add(root, "path", { d: `M${x + 0.5} 345v4`, stroke: "#fff" });
    label(root, i ? x - 1 : 4.5, 358, "16 Nov " + t, "#fff", i ? 57 : 53);
  });

  const notes = [
    [13.5, "EURUSD,M5  1.17674 1.17695 1.17669 1.17680", 202],
    [27, "Ширина зоны слева= 24", 103],
    [39, "Ширина зоны справа= 24", 108],
    [51, "Зона последнего SELL= 2017.11.15 09:00:00", 189],
    [63, "Зона последнего BUY= 2017.11.09 15:45:00", 188],
    [75, "Величина спреда при привешении =0", 160],
    [87, "Время обнаружения превышения спреда =1970.01.01 00:00:00", 271]
  ];
  notes.forEach(n => label(root, 9, n[0], n[1], "#fff", n[2]));
}

function drawBalanceChart() {
  const svg = document.getElementById("balanceChart");
  const grid = "#c8c8c8";
  const xs = [0, 9, 16, 24, 31, 39, 47, 54, 62, 70, 77, 85, 92, 100, 108, 115, 123, 131, 138, 146, 153, 161, 169, 176, 184, 192, 199, 207, 214, 222, 230, 237, 245, 253, 260, 268, 275, 283, 291, 298, 306];
  const ys = [182520, 158163, 133806, 109450, 85093, 60737];

  ys.forEach((v, i) => {
    const y = 501.5 + i * 32;
    if (i < 5) add(svg, "path", { d: `M21 ${y}H1317`, stroke: grid, "stroke-dasharray": "4 3" });
    add(svg, "path", { d: `M1318 ${y}h2`, stroke: "#000" });
    label(svg, 1322, y + 4, v, "#000", v > 99999 ? 30 : 25);
  });
  xs.forEach((v, i) => {
    const x = 20.5 + i * 32;
    if (i) add(svg, "path", { d: `M${x} 496V662`, stroke: grid, "stroke-dasharray": "4 3" });
    add(svg, "path", { d: `M${x} 662v2`, stroke: "#000" });
    label(svg, i ? x : 26, 673, v, "#000", String(v).length * 5, "end");
  });
  add(svg, "rect", { x: 20.5, y: 495.5, width: 1297, height: 166, fill: "none", stroke: "#000" });
  add(svg, "rect", { x: 22, y: 498, width: 647, height: 11, fill: "#fff" });
  label(svg, 24, 507, "Баланс", "#0000b0", 28);
  label(svg, 56, 507, "/", "#000");
  label(svg, 62.5, 507, "Средства", "#00a000", 41);
  label(svg, 106.5, 507, "/", "#000");
  label(svg, 113, 507, "Все тики (наиболее точный метод на основе всех наименьших доступных таймфреймов для генерации каждого тика) / 90.00%", "#000", 555);

  const equity = [
    "25,610 29.500,655 33.500,613 37,610", "115,602 120,602", "238,595 242.500,637 247.500,595",
    "527,573 531.500,583 536,580 540,572", "569,570 573.500,592 578,579 582,569",
    "790,548.500 795,548.500 799.500,558 804,549", "1073,530 1076.500,539 1081,530", "1107,526 1109.500,520 1113,526"
  ];
  equity.forEach(points => add(svg, "polyline", { points, fill: "none", stroke: "#109010" }));
  add(svg, "polyline", {
    points: "21,610 52,608 117,603 180,598 233,594 250,594.500 287,592 372,585 460,578 500,575 530,572.500 583,567.500 683,559.500 733,555.500 783,550 817,548.500 900,542 1067,529 1077,528.500 1093,529 1133,525 1233,517.500 1316,511",
    fill: "none", stroke: "#00008b", "stroke-width": 2
  });
  [[28.5, 630.5, 19, 36.5], [244, 615, 20.5, 36.5], [558, 575, 42.5, 31.5]].forEach(([cx, cy, rx, ry]) => {
    add(svg, "ellipse", { cx, cy, rx, ry, fill: "none", stroke: "#e31e24", "stroke-width": 5 });
  });
}

function drawNetBars() {
  const svg = document.getElementById("netBars");
  for (let i = 0; i < 8; i++) {
    const split = 9 - i;
    add(svg, "rect", { x: i * 3, y: 0, width: 2, height: split, fill: "#5f7a1c" });
    add(svg, "rect", { x: i * 3, y: split + 1, width: 2, height: 12 - split, fill: "#163f60" });
  }
}

drawPriceChart();
drawBalanceChart();
drawNetBars();
```
